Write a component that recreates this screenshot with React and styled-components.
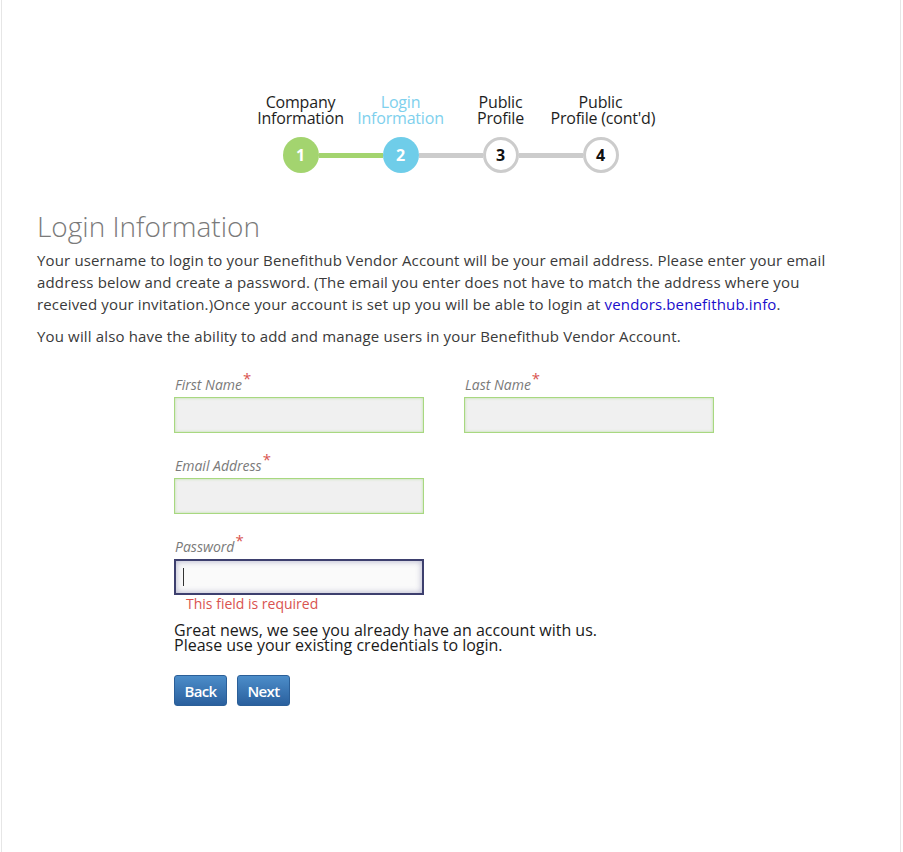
import React from "react";
import styled, { createGlobalStyle } from "styled-components";

const steps = [
  { num: 1, label: ["Company", "Information"], state: "done" },
  { num: 2, label: ["Login", "Information"], state: "active" },
  { num: 3, label: ["Public", "Profile"], state: "todo" },
  { num: 4, label: ["Public", "Profile (cont'd)"], state: "todo" },
];

const GlobalStyle = createGlobalStyle`
  html, body {
    margin: 0;
    padding: 0;
    background: #fff;
  }
  body {
    font-family: "Open Sans", "Liberation Sans", sans-serif;
    color: #333;
  }
`;

const Page = styled.div`
  box-sizing: border-box;
  width: 900px;
  min-height: 852px;
  margin-left: 1px;
  border-left: 1px solid #e6e6e6;
  border-right: 1px solid #e6e6e6;
  padding: 94px 36px 40px 35px;
`;

const Stepper = styled.div`
  display: flex;
  flex-direction: column;
  align-items: center;
  gap: 11px;
`;

const LabelRow = styled.div`
  display: grid;
  grid-template-columns: repeat(4, 100px);
`;

const StepLabel = styled.div`
  text-align: center;
  font-size: 16px;
  line-height: 16px;
  letter-spacing: -0.2px;
  white-space: nowrap;
  color: ${(p) => (p.$active ? "#7ed0ed" : "#1e1e1e")};
`;

const Track = styled.div`
  display: flex;
  align-items: center;
`;

const Circle = styled.div`
  box-sizing: border-box;
  width: 36px;
  height: 36px;
  border-radius: 50%;
  display: flex;
  align-items: center;
  justify-content: center;
  font-size: 16px;
  font-weight: 700;
  background: ${(p) =>
    p.$state === "done" ? "#a3d46f" : p.$state === "active" ? "#6fcde9" : "#fff"};
  color: ${(p) => (p.$state === "todo" ? "#111" : "#fff")};
  border: ${(p) => (p.$state === "todo" ? "3px solid #cccccc" : "none")};
`;

const Connector = styled.div`
  width: 64px;
  height: 5px;
  background: ${(p) => (p.$done ? "#a3d46f" : "#cccccc")};
`;

const Heading = styled.h1`
  margin: 36px 0 6px;
  font-size: 28px;
  line-height: 34px;
  font-weight: 300;
  color: #7a7a7a;
  letter-spacing: 0;
`;

const Para = styled.p`
  margin: 0 0 10px;
  font-size: 15px;
  line-height: 22px;
  color: #3a3a3a;
  max-width: 792px;
  letter-spacing: 0.15px;
`;

const Link = styled.a`
  color: #1a0dcc;
  text-decoration: none;
`;

const Form = styled.form`
  margin: 29px 0 0 137px;
  display: flex;
  flex-direction: column;
`;

const FieldRow = styled.div`
  display: flex;
  gap: 40px;
  margin-bottom: 24px;
`;

const Field = styled.div`
  display: flex;
  flex-direction: column;
  width: 250px;
`;

const Label = styled.label`
  font-size: 14px;
  line-height: 18px;
  font-style: italic;
  color: #7a7a7a;
  margin: 0 0 3px 1px;
  letter-spacing: 0;
`;

const Req = styled.sup`
  color: #d9534f;
  font-style: normal;
  font-size: 15px;
  line-height: 0;
  vertical-align: 6px;
  margin-left: 1px;
`;

const Input = styled.input`
  box-sizing: border-box;
  width: 250px;
  height: 36px;
  padding: 0 8px;
  font-family: inherit;
  font-size: 15px;
  outline: none;
  background: ${(p) => (p.$focused ? "#fafafa" : "#f0f0f0")};
  border: ${(p) => (p.$focused ? "2px solid #3d3f6e" : "1px solid #a8d880")};
  box-shadow: ${(p) =>
    p.$focused
      ? "inset 0 0 6px rgba(80, 80, 140, 0.45)"
      : "inset 0 0 3px rgba(150, 210, 110, 0.6)"};
`;

const Caret = styled.span`
  position: absolute;
  left: 9px;
  top: 9px;
  width: 1px;
  height: 18px;
  background: #333;
`;

const InputWrap = styled.div`
  position: relative;
`;

const ErrorText = styled.div`
  font-size: 14px;
  line-height: 16px;
  color: #d9534f;
  padding: 1px 0 0 12px;
  letter-spacing: 0;
`;

const Notice = styled.div`
  margin-top: 11px;
  font-size: 16px;
  line-height: 15px;
  color: #1a1a1a;
  letter-spacing: 0;
`;

const Buttons = styled.div`
  display: flex;
  gap: 10px;
  margin-top: 22px;
`;

const Button = styled.button`
  box-sizing: border-box;
  width: 53px;
  height: 31px;
  padding: 0;
  border: 1px solid #2b5f98;
  border-radius: 3px;
  background: linear-gradient(#4c8dc9, #2a609e);
  color: #fff;
  font-family: "Open Sans", "Liberation Sans", sans-serif;
  font-size: 15px;
  font-weight: 600;
  letter-spacing: -0.6px;
  cursor: pointer;
`;

const App = () => {
  return (
    <>
      <GlobalStyle />
      <Page>
        <Stepper>
          <LabelRow>
            {steps.map((s) => (
              <StepLabel key={s.num} $active={s.state === "active"}>
                {s.label[0]}
                <br />
                {s.label[1]}
              </StepLabel>
            ))}
          </LabelRow>
          <Track>
            {steps.map((s, i) => (
              <React.Fragment key={s.num}>
                {i > 0 && <Connector $done={steps[i].state !== "todo"} />}
                <Circle $state={s.state}>{s.num}</Circle>
              </React.Fragment>
            ))}
          </Track>
        </Stepper>

        <Heading>Login Information</Heading>
        <Para>
          Your username to login to your Benefithub Vendor Account will be your
          email address. Please enter your email address below and create a
          password. (The email you enter does not have to match the address
          where you received your invitation.)Once your account is set up you
          will be able to login at{" "}
          <Link href="#">vendors.benefithub.info</Link>.
        </Para>
        <Para>
          You will also have the ability to add and manage users in your
          Benefithub Vendor Account.
        </Para>

        <Form onSubmit={(e) => e.preventDefault()}>
          <FieldRow>
            <Field>
              <Label>
                First Name<Req>*</Req>
              </Label>
              <Input />
            </Field>
            <Field>
              <Label>
                Last Name<Req>*</Req>
              </Label>
              <Input />
            </Field>
          </FieldRow>
          <FieldRow>
            <Field>
              <Label>
                Email Address<Req>*</Req>
              </Label>
              <Input />
            </Field>
          </FieldRow>
          <Field>
            <Label>
              Password<Req>*</Req>
            </Label>
            <InputWrap>
              <Input type="password" $focused />
              <Caret />
            </InputWrap>
          </Field>
          <ErrorText>This field is required</ErrorText>
          <Notice>
            Great news, we see you already have an account with us.
            <br />
            Please use your existing credentials to login.
          </Notice>
          <Buttons>
            <Button type="button">Back</Button>
            <Button type="button">Next</Button>
          </Buttons>
        </Form>
      </Page>
    </>
  );
};

export default App;
